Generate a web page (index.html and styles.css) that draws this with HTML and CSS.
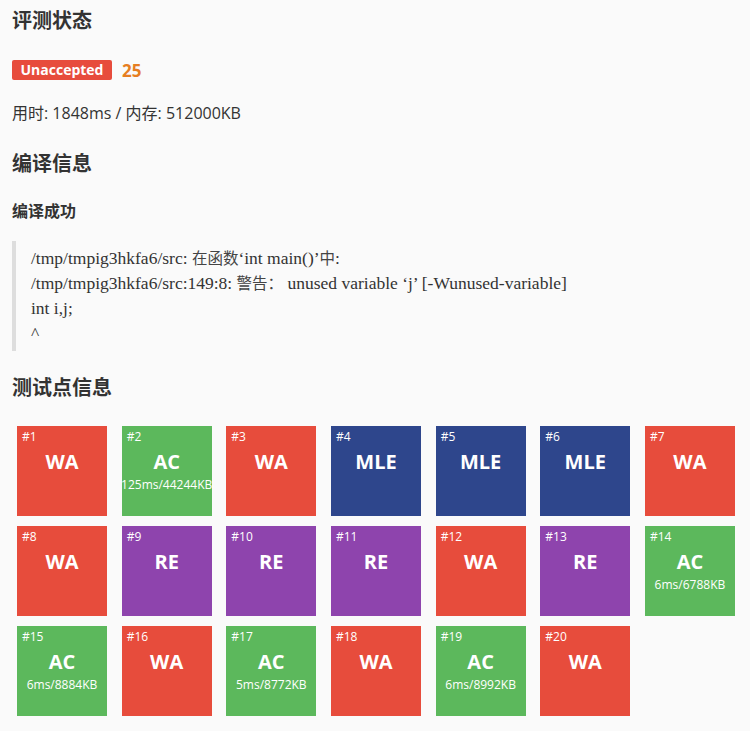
FILE: index.html
```html
<!DOCTYPE html>
<html lang="zh">
<head>
<meta charset="utf-8">
<link rel="stylesheet" href="styles.css">
</head>
<body>
<div class="page">
  <h2 class="title t1">评测状态</h2>
  <div class="status">
    <span class="badge">Unaccepted</span>
    <span class="score">25</span>
  </div>
  <p class="usage">用时: 1848ms / 内存: 512000KB</p>
  <h2 class="title t2">编译信息</h2>
  <h4 class="sub">编译成功</h4>
  <blockquote class="compile">
    <div class="line">/tmp/tmpig3hkfa6/src: <span class="cjk">在函数</span>‘int main()’<span class="cjk">中</span>:</div>
    <div class="line">/tmp/tmpig3hkfa6/src:149:8: <span class="cjk">警告：</span> unused variable ‘j’ [-Wunused-variable]</div>
    <div class="line">int i,j;</div>
    <div class="line">^</div>
  </blockquote>
  <h2 class="title t3">测试点信息</h2>
  <div class="cases">
    <div class="case wa"><span class="no">#1</span><span class="res">WA</span></div>
    <div class="case ac"><span class="no">#2</span><span class="res">AC</span><span class="info">125ms/44244KB</span></div>
    <div class="case wa"><span class="no">#3</span><span class="res">WA</span></div>
    <div class="case mle"><span class="no">#4</span><span class="res">MLE</span></div>
    <div class="case mle"><span class="no">#5</span><span class="res">MLE</span></div>
    <div class="case mle"><span class="no">#6</span><span class="res">MLE</span></div>
    <div class="case wa"><span class="no">#7</span><span class="res">WA</span></div>
    <div class="case wa"><span class="no">#8</span><span class="res">WA</span></div>
    <div class="case re"><span class="no">#9</span><span class="res">RE</span></div>
    <div class="case re"><span class="no">#10</span><span class="res">RE</span></div>
    <div class="case re"><span class="no">#11</span><span class="res">RE</span></div>
    <div class="case wa"><span class="no">#12</span><span class="res">WA</span></div>
    <div class="case re"><span class="no">#13</span><span class="res">RE</span></div>
    <div class="case ac"><span class="no">#14</span><span class="res">AC</span><span class="info">6ms/6788KB</span></div>
    <div class="case ac"><span class="no">#15</span><span class="res">AC</span><span class="info">6ms/8884KB</span></div>
    <div class="case wa"><span class="no">#16</span><span class="res">WA</span></div>
    <div class="case ac"><span class="no">#17</span><span class="res">AC</span><span class="info">5ms/8772KB</span></div>
    <div class="case wa"><span class="no">#18</span><span class="res">WA</span></div>
    <div class="case ac"><span class="no">#19</span><span class="res">AC</span><span class="info">6ms/8992KB</span></div>
    <div class="case wa"><span class="no">#20</span><span class="res">WA</span></div>
  </div>
</div>
</body>
</html>
```
FILE: styles.css
```css
html, body {
  margin: 0;
  padding: 0;
  background: #fafafa;
}
body {
  font-family: "Open Sans", "Noto Sans CJK SC", sans-serif;
  color: #333;
}
.page {
  padding: 0 12px;
}
.title {
  font-family: "Noto Sans CJK SC", sans-serif;
  font-size: 20px;
  font-weight: 700;
  line-height: 28px;
  margin: 0;
  color: #333;
}
.t1 { padding-top: 6px; }
.status {
  display: flex;
  align-items: center;
  margin-top: 26px;
  height: 20px;
}
.badge {
  background: #e74c3c;
  color: #fff;
  font-weight: 700;
  font-size: 14px;
  line-height: 20px;
  height: 20px;
  padding: 0 8px;
  border-radius: 2px;
  width: 84px;
  text-align: center;
}
.score {
  color: #e67e22;
  font-weight: 700;
  font-size: 17px;
  margin-left: 10px;
}
.usage {
  margin: 22px 0 0;
  font-size: 16px;
  line-height: 22px;
}
.t2 { margin-top: 25px; }
.sub {
  font-family: "Noto Sans CJK SC", sans-serif;
  font-size: 16px;
  font-weight: 700;
  margin: 21px 0 0;
  line-height: 24px;
}
.compile {
  margin: 19px 0 0;
  border-left: 4px solid #ddd;
  padding: 5px 0 5px 15px;
  font-family: "Liberation Serif", "Noto Sans CJK SC", serif;
  font-size: 17.5px;
  line-height: 25px;
  color: #333;
}
.line {
  height: 25px;
  line-height: 25px;
  white-space: nowrap;
}
.cjk {
  font-size: 15.5px;
  line-height: 1;
  color: #444;
}
.t3 { margin-top: 22px; }
.cases {
  display: grid;
  grid-template-columns: repeat(7, 90px);
  column-gap: 14.67px;
  row-gap: 10px;
  margin-top: 25px;
  padding-left: 5px;
}
.case {
  position: relative;
  width: 90px;
  height: 90px;
  color: #fff;
  display: flex;
  flex-direction: column;
  align-items: center;
  overflow: hidden;
}
.wa { background: #e74c3c; }
.ac { background: #5cb85c; }
.mle { background: #2e468c; }
.re { background: #8e44ad; }
.no {
  position: absolute;
  left: 5px;
  top: 3px;
  font-size: 12px;
  line-height: 16px;
}
.res {
  margin-top: 22px;
  font-size: 20px;
  font-weight: 700;
  line-height: 28px;
}
.info {
  font-size: 12px;
  line-height: 18px;
  white-space: nowrap;
}
```
